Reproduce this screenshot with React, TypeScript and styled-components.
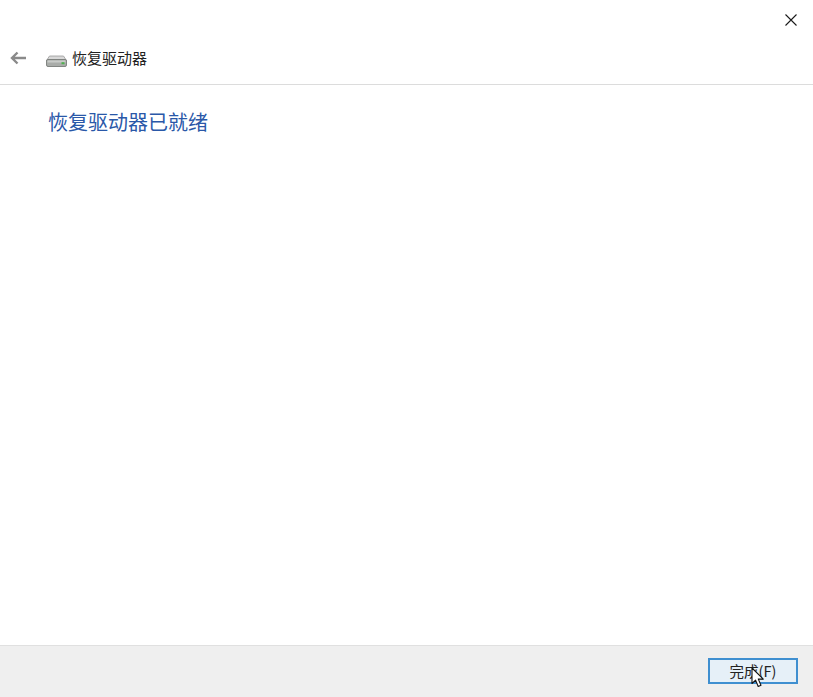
import styled, { createGlobalStyle } from 'styled-components'

const GlobalStyle = createGlobalStyle`
  html, body {
    margin: 0;
    height: 100%;
    background: #ffffff;
  }
  #root {
    height: 100%;
  }
`

const Wizard = styled.div`
  width: 813px;
  height: 697px;
  display: flex;
  flex-direction: column;
  font-family: "Noto Sans CJK SC", "Liberation Sans", sans-serif;
  background: #ffffff;
  overflow: hidden;
`

const TitleBar = styled.div`
  height: 40px;
  display: flex;
  justify-content: flex-end;
  align-items: center;
  padding-right: 15px;
`

const CloseButton = styled.button`
  appearance: none;
  border: 0;
  padding: 0;
  width: 14px;
  height: 14px;
  background: transparent;
  display: flex;
  color: #1a1a1a;
`

const NavBar = styled.div`
  height: 45px;
  display: flex;
  align-items: center;
  border-bottom: 1px solid #dcdcdc;
  padding-left: 10px;
  padding-bottom: 8px;
  box-sizing: border-box;
`

const BackButton = styled.button`
  appearance: none;
  border: 0;
  padding: 0;
  width: 17px;
  height: 14px;
  margin-right: 19px;
  background: transparent;
  display: flex;
`

const DriveIcon = styled.svg`
  width: 21px;
  height: 12px;
  margin-top: 5px;
  margin-right: 5px;
`

const NavTitle = styled.span`
  font-size: 15px;
  line-height: 20px;
  color: #222222;
`

const Content = styled.main`
  flex: 1;
  padding: 22px 0 0 48px;
`

const Heading = styled.h1`
  margin: 0;
  font-size: 20px;
  line-height: 30px;
  font-weight: 400;
  color: #2a58a8;
`

const Footer = styled.footer`
  height: 52px;
  box-sizing: border-box;
  background: #efefef;
  border-top: 1px solid #e0e0e0;
  display: flex;
  justify-content: flex-end;
  align-items: flex-start;
  padding: 12px 15px 0 0;
`

const PrimaryButton = styled.button`
  appearance: none;
  position: relative;
  width: 90px;
  height: 26px;
  padding: 0;
  box-sizing: border-box;
  border: 2px solid #3f8fd0;
  background: #e6f0f8;
  font-family: inherit;
  font-size: 14.5px;
  line-height: 22px;
  color: #222222;
`

const Cursor = styled.svg`
  position: absolute;
  left: 41px;
  top: 7px;
  width: 14px;
  height: 21px;
`

export default function App() {
  return (
    <>
      <GlobalStyle />
      <Wizard>
        <TitleBar>
          <CloseButton aria-label="关闭">
            <svg width="14" height="14" viewBox="0 0 14 14" fill="none" stroke="currentColor" strokeWidth="1.1">
              <path d="M1.5 1.5l11 11M12.5 1.5l-11 11" />
            </svg>
          </CloseButton>
        </TitleBar>
        <NavBar>
          <BackButton aria-label="返回">
            <svg width="17" height="14" viewBox="0 0 17 14" fill="none" stroke="#8a8a8a" strokeWidth="2.4">
              <path d="M16 7H2M7.5 1.5L2 7l5.5 5.5" />
            </svg>
          </BackButton>
          <DriveIcon viewBox="0 0 21 12">
            <path d="M3.5 1h14L20.5 5.5H.5z" fill="#d8d8d8" stroke="#9a9a9a" strokeWidth="0.8" />
            <rect x="0.5" y="4.5" width="20" height="7" rx="1.5" fill="#a9aca9" stroke="#6f716f" strokeWidth="0.8" />
            <rect x="1.5" y="5.5" width="18" height="2" fill="#c9cbc9" />
            <rect x="15.5" y="7.2" width="3" height="2" fill="#4fb04f" />
          </DriveIcon>
          <NavTitle>恢复驱动器</NavTitle>
        </NavBar>
        <Content>
          <Heading>恢复驱动器已就绪</Heading>
        </Content>
        <Footer>
          <PrimaryButton>
            完成(F)
            <Cursor viewBox="0 0 14 21">
              <path d="M1 1v15.5l3.6-3.4 2.6 6.4 2.8-1.2-2.7-6.2h5z" fill="#ffffff" stroke="#111111" strokeWidth="1.1" strokeLinejoin="round" />
            </Cursor>
          </PrimaryButton>
        </Footer>
      </Wizard>
    </>
  )
}
